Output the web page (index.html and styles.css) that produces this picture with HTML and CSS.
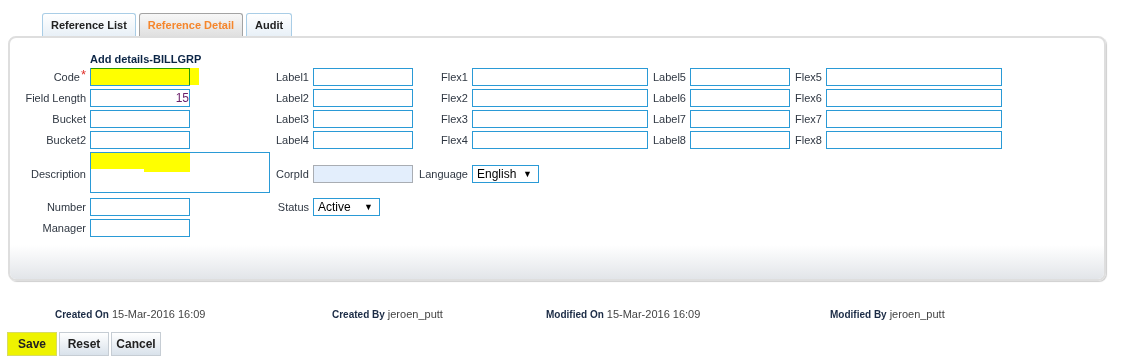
FILE: index.html
```html
<!DOCTYPE html>
<html lang="en">
<head>
    <meta charset="UTF-8">
    <meta name="viewport" content="width=device-width, initial-scale=1.0">
    <title>Reference Detail</title>
    <link rel="stylesheet" href="styles.css">
</head>
<body>
    <div class="page">
        <ul class="tabs">
            <li class="tab">Reference List</li>
            <li class="tab active">Reference Detail</li>
            <li class="tab">Audit</li>
        </ul>

        <div class="panel">
            <h3 class="form-title">Add details-BILLGRP</h3>
            <div class="form-grid">
                <label class="first" for="code">Code<span class="req">*</span></label>
                <span class="hl">
                    <input type="text" id="code">
                    <span class="mark mark-code"></span>
                </span>
                <label class="lab2">Label1</label>
                <input type="text">
                <label>Flex1</label>
                <input type="text">
                <label>Label5</label>
                <input type="text">
                <label>Flex5</label>
                <input type="text">

                <label class="first" for="fieldLength">Field Length</label>
                <input type="text" id="fieldLength" class="num" value="15">
                <label class="lab2">Label2</label>
                <input type="text">
                <label>Flex2</label>
                <input type="text">
                <label>Label6</label>
                <input type="text">
                <label>Flex6</label>
                <input type="text">

                <label class="first">Bucket</label>
                <input type="text">
                <label class="lab2">Label3</label>
                <input type="text">
                <label>Flex3</label>
                <input type="text">
                <label>Label7</label>
                <input type="text">
                <label>Flex7</label>
                <input type="text">

                <label class="first">Bucket2</label>
                <input type="text">
                <label class="lab2">Label4</label>
                <input type="text">
                <label>Flex4</label>
                <input type="text">
                <label>Label8</label>
                <input type="text">
                <label>Flex8</label>
                <input type="text">

                <label class="first">Description</label>
                <span class="hl desc">
                    <textarea></textarea>
                    <span class="mark mark-desc1"></span>
                    <span class="mark mark-desc2"></span>
                </span>
                <label>CorpId</label>
                <input type="text" class="readonly" readonly>
                <label>Language</label>
                <span class="select">
                    <select>
                        <option>English</option>
                    </select>
                </span>

                <label class="first">Number</label>
                <input type="text">
                <label class="lab-status">Status</label>
                <span class="select">
                    <select>
                        <option>Active</option>
                    </select>
                </span>

                <label class="first">Manager</label>
                <input type="text">
            </div>
            <div class="panel-foot"></div>
        </div>

        <div class="audit">
            <div><b>Created On</b><span>15-Mar-2016 16:09</span></div>
            <div><b>Created By</b><span>jeroen_putt</span></div>
            <div><b>Modified On</b><span>15-Mar-2016 16:09</span></div>
            <div><b>Modified By</b><span>jeroen_putt</span></div>
        </div>

        <div class="actions">
            <button class="btn-save">Save</button>
            <button>Reset</button>
            <button>Cancel</button>
        </div>
    </div>
</body>
</html>
```

FILE: styles.css
```css
body {
    margin: 0;
    font-family: "Liberation Sans", Arial, sans-serif;
    font-size: 11px;
    color: #333;
    background: #fff;
}
.page {
    padding-top: 13px;
}
.tabs {
    list-style: none;
    margin: 0 0 0 42px;
    padding: 0;
    display: flex;
    gap: 3px;
    height: 23px;
    align-items: flex-end;
}
.tab {
    height: 23px;
    box-sizing: border-box;
    padding: 0 8px;
    border: 1px solid #a9cde6;
    border-bottom: none;
    border-radius: 3px 3px 0 0;
    background: linear-gradient(#ffffff, #e8f0f7);
    font-weight: bold;
    font-size: 11px;
    line-height: 22px;
    color: #222;
}
.tab.active {
    border-color: #a3a3a3;
    background: linear-gradient(#f7f7f7, #e0e0e0);
    color: #f5862c;
}
.panel {
    margin: 0 16px 0 8px;
    border: 2px solid #dedede;
    border-radius: 8px;
    box-shadow: 1px 1px 1px #cfcfcf;
    overflow: hidden;
}
.form-title {
    margin: 15px 0 2px 80px;
    font-size: 11px;
    line-height: 13px;
    font-weight: bold;
    color: #0b2546;
}
.form-grid {
    display: grid;
    grid-template-columns: 80px 100px 80px 43px 100px 59px 176px 42px 100px 36px 176px;
    grid-template-rows: repeat(4, 18px) 43px 18px 18px;
    row-gap: 3px;
    align-items: center;
    margin-bottom: 8px;
}
.form-grid label {
    text-align: right;
    padding-right: 4px;
    white-space: nowrap;
    color: #2f3742;
}
.form-grid .first {
    grid-column: 1;
}
.form-grid .lab2 {
    grid-column: span 2;
}
.form-grid .lab-status {
    grid-column: 4;
}
.req {
    color: #e0302a;
    font-size: 13px;
    line-height: 10px;
    vertical-align: top;
    position: relative;
    top: -1px;
    margin-left: 1px;
}
input, textarea, select {
    box-sizing: border-box;
    margin: 0;
    border: 1px solid #2a9ad6;
    border-radius: 0;
    background: #fff;
    font-family: "Liberation Sans", Arial, sans-serif;
    font-size: 12px;
}
input {
    display: block;
    width: 100%;
    height: 18px;
    padding: 0 2px;
}
input.num {
    text-align: right;
    padding-right: 0;
    color: #6a1f6a;
}
input.readonly {
    border-color: #a9adb3;
    background: #e3eefc;
}
textarea {
    display: block;
    width: 180px;
    height: 41px;
    resize: none;
    padding: 2px;
}
.hl {
    position: relative;
    display: block;
}
.hl.desc {
    grid-column: span 2;
    align-self: start;
}
.mark {
    position: absolute;
    background: #ffff00;
    mix-blend-mode: multiply;
}
.mark-code {
    left: 1px;
    top: 0;
    width: 108px;
    height: 17px;
}
.mark-desc1 {
    left: 1px;
    top: 1px;
    width: 99px;
    height: 16px;
}
.mark-desc2 {
    left: 54px;
    top: 3px;
    width: 46px;
    height: 17px;
}
.select {
    position: relative;
    display: block;
    width: 67px;
}
.select select {
    appearance: none;
    -webkit-appearance: none;
    display: block;
    width: 67px;
    height: 18px;
    padding: 0 4px;
    color: #000;
}
.select::after {
    content: "\25BC";
    position: absolute;
    right: 7px;
    top: 4px;
    font-size: 9px;
    line-height: 10px;
    color: #000;
    pointer-events: none;
}
.panel-foot {
    height: 34px;
    background: linear-gradient(#ffffff, #e2e5e9);
}
.audit {
    display: grid;
    grid-template-columns: 277px 214px 284px auto;
    padding-left: 55px;
    margin-top: 27px;
    line-height: 13px;
}
.audit b {
    font-size: 10px;
    color: #1b2b45;
}
.audit span {
    margin-left: 3px;
    color: #444;
}
.actions {
    display: flex;
    gap: 2px;
    margin: 11px 0 0 7px;
}
button {
    width: 50px;
    height: 24px;
    padding: 0;
    border: 1px solid #c6cdd4;
    background: linear-gradient(#ffffff, #d9e2eb);
    font-family: "Liberation Sans", Arial, sans-serif;
    font-size: 12px;
    font-weight: bold;
    color: #222;
    cursor: pointer;
}
button.btn-save {
    background: #eef300;
    border-color: #d8dc60;
}
```
